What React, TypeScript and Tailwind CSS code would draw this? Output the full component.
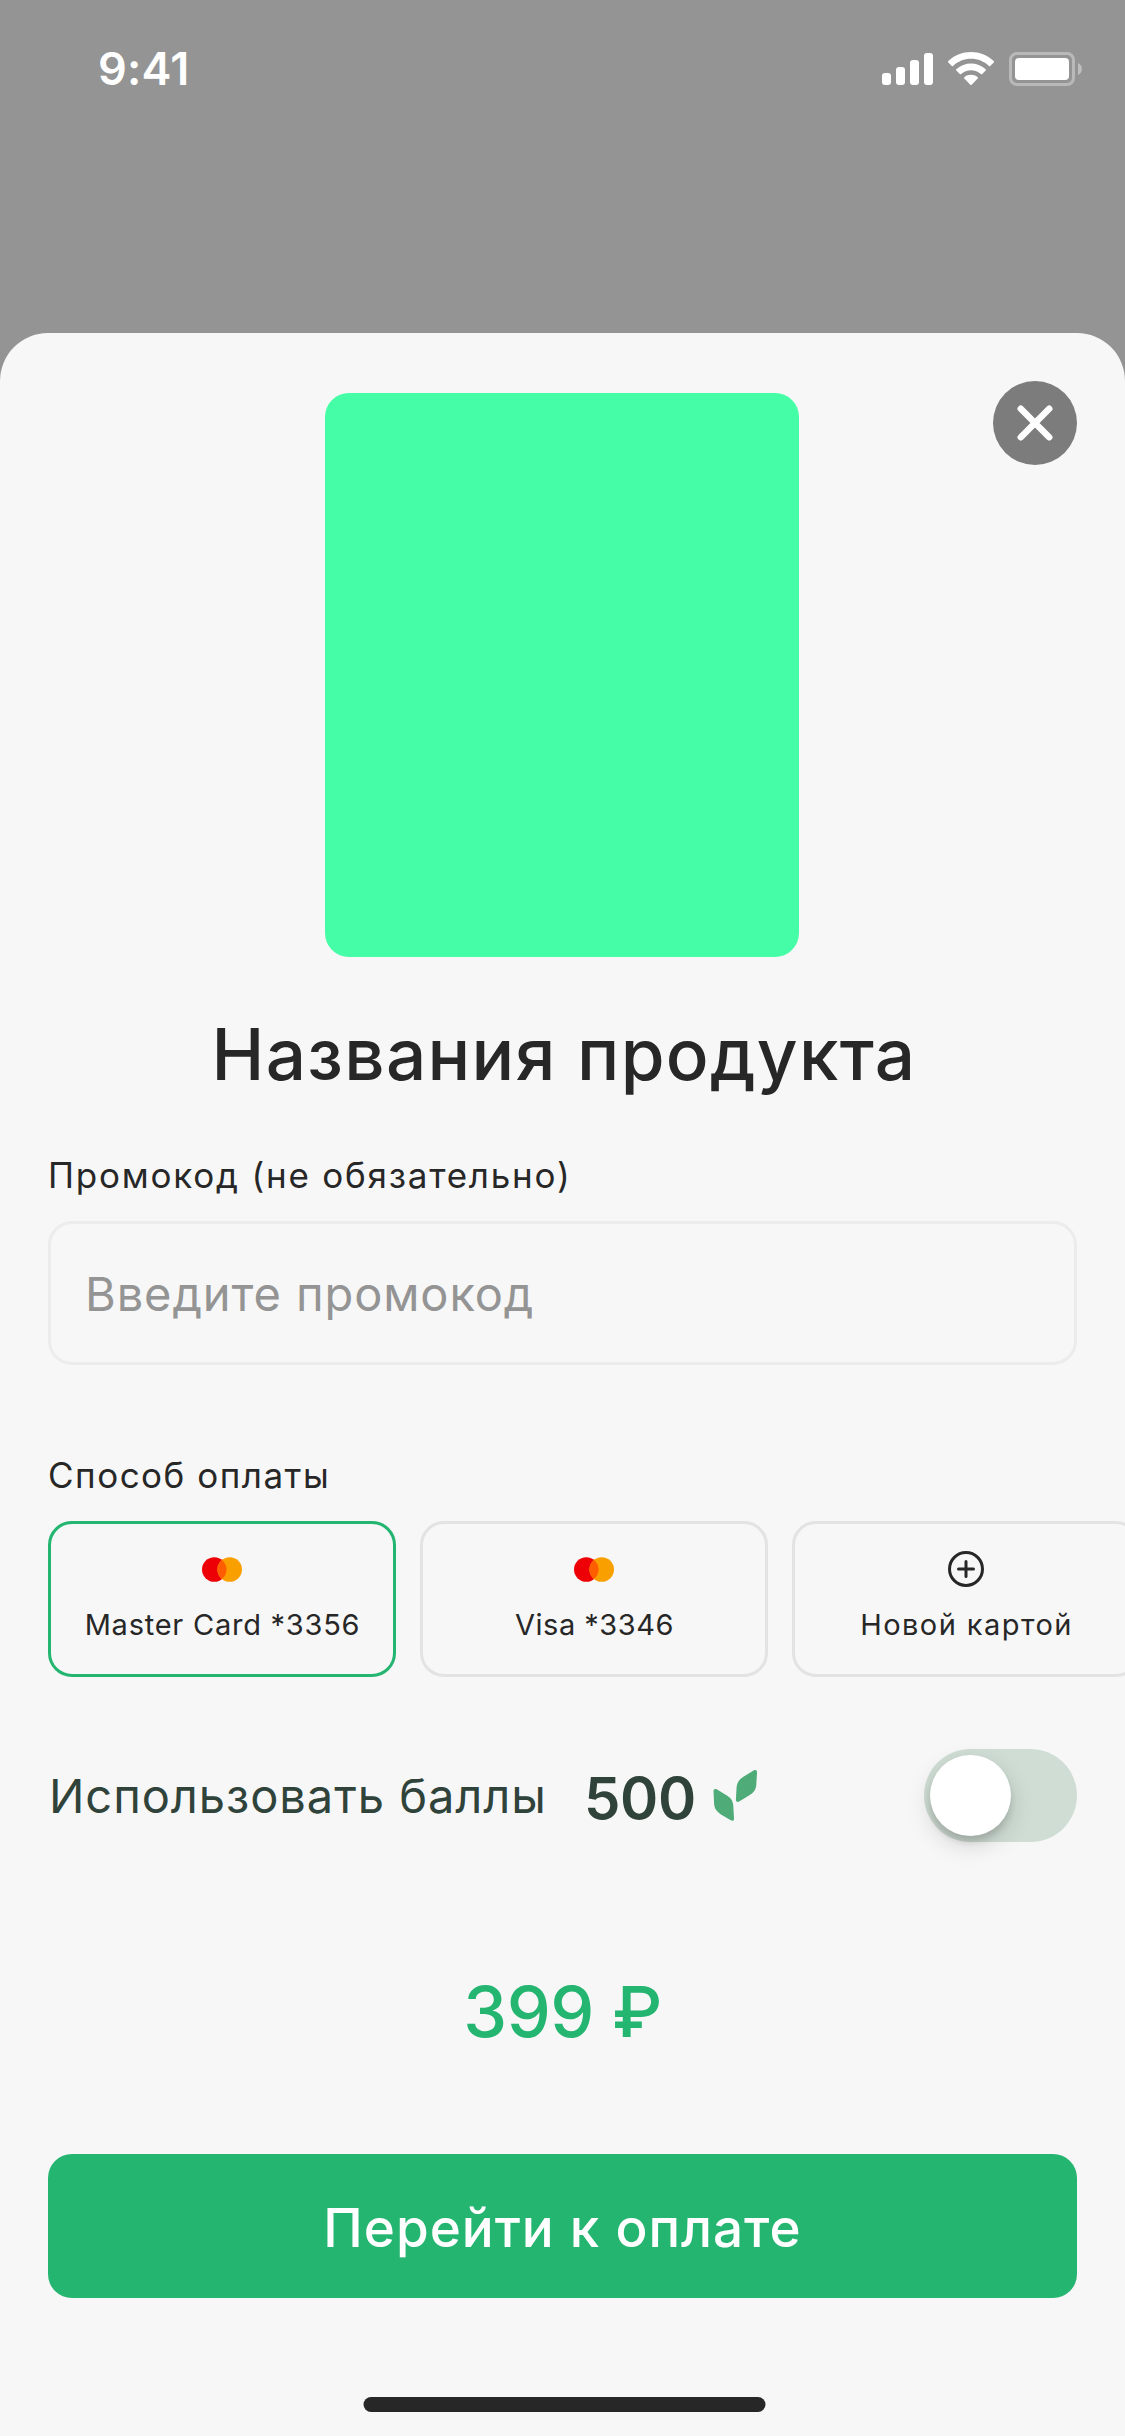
import React from "react";

function StatusIcons() {
  return (
    <div className="flex">
      <svg width="52" height="34" viewBox="0 0 52 34" fill="#fff">
        <rect x="0" y="21" width="9" height="12" rx="3" />
        <rect x="14" y="15" width="9" height="18" rx="3" />
        <rect x="28" y="8" width="9" height="25" rx="3" />
        <rect x="42" y="1" width="9" height="32" rx="3" />
      </svg>
      <svg className="ml-[14px]" width="46" height="33" viewBox="0 0 15.333 11" fill="#fff">
        <path d="M7.667 2.277C9.891 2.277 12.031 3.132 13.643 4.665C13.765 4.783 13.959 4.782 14.079 4.662L15.24 3.495C15.3 3.434 15.334 3.351 15.333 3.265C15.333 3.179 15.298 3.097 15.237 3.037C11.005 -1.001 4.328 -1.001 0.096 3.037C0.035 3.097 0 3.179 0 3.265C-0.001 3.351 0.033 3.434 0.093 3.495L1.255 4.662C1.374 4.782 1.569 4.783 1.69 4.665C3.303 3.132 5.442 2.277 7.667 2.277Z" />
        <path d="M7.667 6.073C8.889 6.073 10.067 6.527 10.973 7.348C11.096 7.464 11.289 7.462 11.408 7.342L12.568 6.175C12.629 6.114 12.663 6.031 12.662 5.945C12.661 5.859 12.625 5.776 12.563 5.716C9.804 3.156 5.532 3.156 2.773 5.716C2.71 5.776 2.675 5.859 2.674 5.945C2.673 6.031 2.707 6.114 2.768 6.175L3.928 7.342C4.047 7.462 4.24 7.464 4.362 7.348C5.268 6.528 6.445 6.074 7.667 6.073Z" />
        <path d="M9.99 8.627C9.992 8.713 9.958 8.797 9.896 8.857L7.89 10.877C7.831 10.936 7.751 10.97 7.667 10.97C7.584 10.97 7.504 10.936 7.445 10.877L5.438 8.857C5.376 8.797 5.343 8.713 5.345 8.627C5.347 8.541 5.384 8.459 5.449 8.401C6.729 7.319 8.606 7.319 9.886 8.401C9.951 8.459 9.988 8.541 9.99 8.627Z" />
      </svg>
      <svg className="ml-[15px]" width="73" height="34" viewBox="0 0 73 34" fill="#fff">
        <rect x="1.5" y="1.5" width="63" height="31" rx="6.5" fill="none" stroke="#fff" strokeWidth="3" opacity="0.35" />
        <rect x="6" y="6" width="54" height="22" rx="4" />
        <path d="M69 11v12a6.6 6.6 0 0 0 0-12Z" opacity="0.4" />
      </svg>
    </div>
  );
}

function CardBrand() {
  return (
    <svg width="40" height="25" viewBox="0 0 40 25">
      <circle cx="12.3" cy="12.5" r="12.3" fill="#ed0006" />
      <circle cx="27.7" cy="12.5" r="12.3" fill="#f9a000" />
      <path d="M20 2.9a12.3 12.3 0 0 1 0 19.2a12.3 12.3 0 0 1 0-19.2Z" fill="#ff5e00" />
    </svg>
  );
}

function PlusCircle() {
  return (
    <svg width="36" height="36" viewBox="0 0 36 36" fill="none" stroke="#272727" strokeLinecap="round" strokeWidth="3">
      <circle cx="18" cy="18" r="16.5" />
      <path d="M18 10.5v15M10.5 18h15" />
    </svg>
  );
}

function Leaf() {
  return (
    <svg width="45" height="51" viewBox="0 0 45 51" fill="#4fab77">
      <path d="M0.5 21C0.5 19 2 18.4 3.7 19.3L13.5 25.2C18.5 28.3 20 31.5 20.3 36L21 48.2C21.1 50.5 19.6 51.3 17.8 50.3L8 44.4C3.2 41.4 1.4 38.4 1.1 33.6Z" />
      <path d="M44 2.4C44 0.3 42.4 -0.5 40.6 0.5L30.8 6.4C26 9.3 24 12.6 23.6 17.2L22.9 29.4C22.8 31.6 24.3 32.5 26.1 31.5L36 25.6C41 22.6 43 19.3 43.3 14.6Z" />
    </svg>
  );
}

const cards = [
  { label: "Master Card *3356", border: "border-[#24b571]", tracking: "tracking-[0.76px]", icon: <CardBrand /> },
  { label: "Visa *3346", border: "border-[#e3e3e3]", tracking: "tracking-[0.5px]", icon: <CardBrand /> },
  { label: "Новой картой", border: "border-[#e3e3e3]", tracking: "tracking-[1.45px]", icon: <PlusCircle /> },
];

export default function App() {
  return (
    <div className="flex h-[2436px] w-[1125px] flex-col overflow-hidden bg-[#949494] font-['Inter',sans-serif] text-[#272727]">
      <header className="flex h-[333px] shrink-0 items-start justify-between pr-[43px] pl-[98px] pt-[52px]">
        <span className="text-[45px] leading-[34px] font-semibold tracking-[0.2px] text-white">9:41</span>
        <StatusIcons />
      </header>

      <main className="relative flex flex-1 flex-col rounded-t-[48px] bg-[#f7f7f7] px-12 pt-[60px]">
        <button aria-label="Закрыть" className="absolute top-12 right-12 flex size-[84px] items-center justify-center rounded-full bg-[#7c7c7c]">
          <svg width="36" height="36" viewBox="0 0 36 36" stroke="#fff" strokeWidth="6.5" strokeLinecap="round">
            <path d="M3.8 3.8l28.4 28.4M32.2 3.8L3.8 32.2" />
          </svg>
        </button>

        <div className="mr-[1px] h-[564px] w-[474px] shrink-0 self-center rounded-3xl bg-[#46fda7]" />
        <h1 className="mt-14 pl-[3px] text-center text-[71px] leading-[83px] font-medium tracking-[1.3px]">Названия продукта</h1>

        <label className="mt-[59px] text-[35px] leading-[41px] tracking-[1.78px]">Промокод (не обязательно)</label>
        <div className="mt-[25px] flex h-36 shrink-0 items-center rounded-3xl border-[3px] border-[#ececec] pt-[2px] pl-[34px]">
          <span className="text-[47px] leading-[56px] tracking-[0.9px] text-[#949494]">Введите промокод</span>
        </div>

        <h2 className="mt-[90px] text-[35px] leading-[41px] tracking-[1.5px]">Способ оплаты</h2>
        <div className="-mr-12 mt-[25px] flex gap-6 overflow-hidden">
          {cards.map((card) => (
            <div key={card.label} className={`flex h-[156px] w-[348px] shrink-0 flex-col items-center rounded-3xl border-[3px] pt-[27px] ${card.border}`}>
              <div className="flex h-9 items-center">{card.icon}</div>
              <span className={`mt-[19px] pl-[1px] text-[29px] leading-[37px] whitespace-nowrap ${card.tracking}`}>{card.label}</span>
            </div>
          ))}
        </div>

        <div className="mt-[72px] flex h-[93px] shrink-0 items-center text-[#30433a]">
          <span className="w-[536px] pt-px pl-px text-[47px] leading-[56px] tracking-[0.95px] whitespace-nowrap">Использовать баллы</span>
          <span className="w-[129px] pt-[5px] text-[58px] leading-[70px] font-semibold tracking-[-0.4px]">500</span>
          <Leaf />
          <div className="ml-auto h-[93px] w-[153px] rounded-full bg-[#cfddd4] p-[6px]">
            <div className="size-[81px] rounded-full bg-white shadow-[0_9px_24px_rgba(0,0,0,0.15),0_6px_6px_rgba(0,0,0,0.12)]" />
          </div>
        </div>

        <p className="mt-32 text-center text-[70px] leading-[84px] font-medium tracking-[-0.43px] text-[#24b571]">399 ₽</p>
        <button className="mt-[100px] flex h-36 shrink-0 items-center justify-center rounded-3xl bg-[#24b571] pt-1 text-[53px] leading-[62px] font-medium tracking-[1px] text-white">
          Перейти к оплате
        </button>
        <div className="mt-[99px] h-[15px] w-[402px] shrink-0 translate-x-[1.5px] self-center rounded-full bg-[#272727]" />
      </main>
    </div>
  );
}
